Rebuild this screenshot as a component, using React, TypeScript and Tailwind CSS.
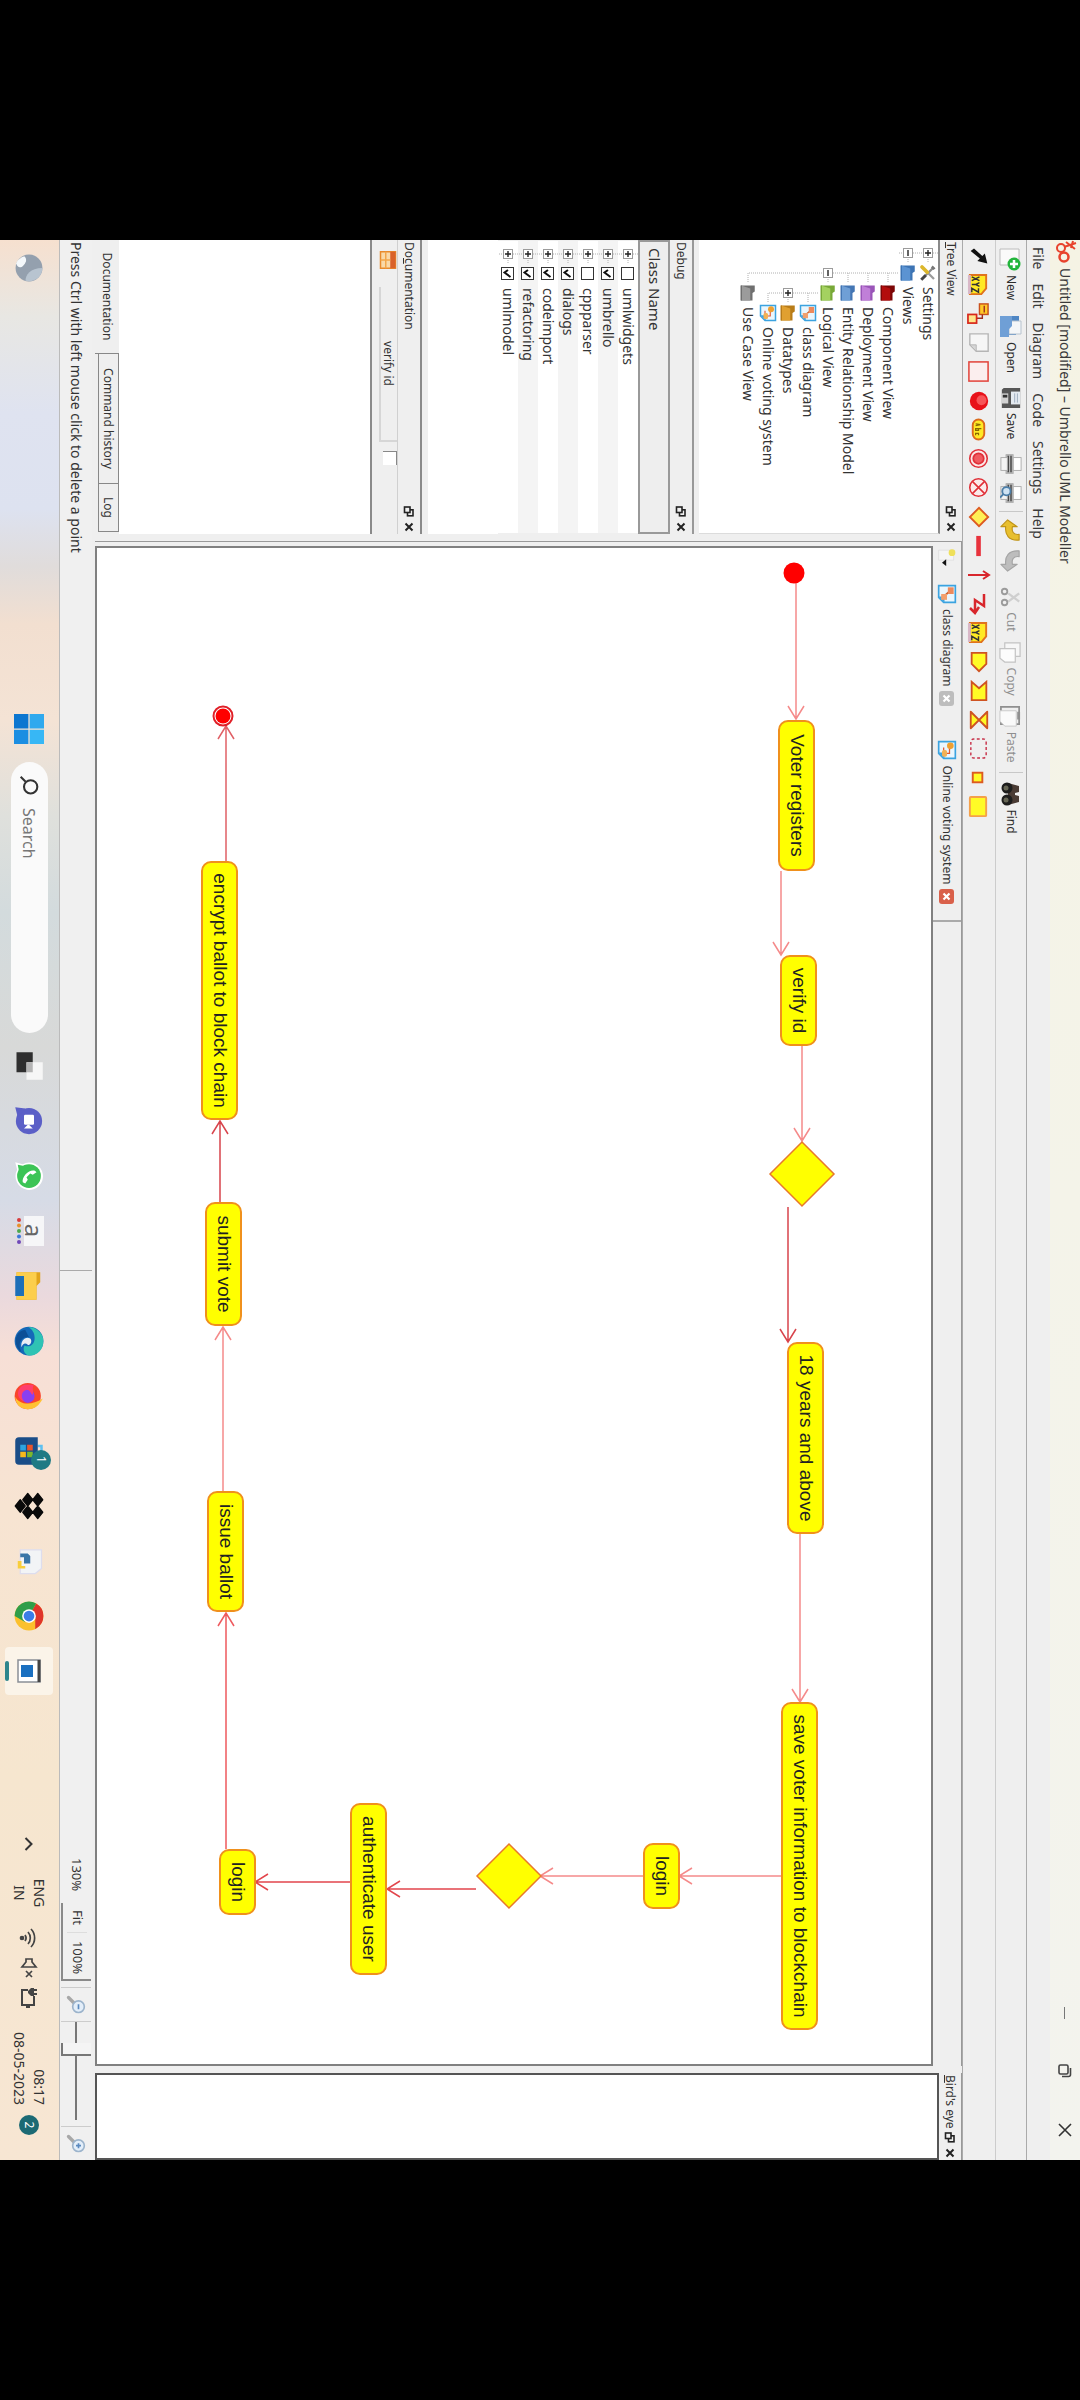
import React from 'react';

type Pt = [number, number];

/* ---------- small drawing helpers ---------- */

function Svg({ s = 22, children }: { s?: number; children: React.ReactNode }) {
  return (
    <svg width={s} height={s} viewBox="0 0 24 24" fill="none" className="shrink-0" aria-hidden="true">
      {children}
    </svg>
  );
}

const Folder = ({ c, d }: { c: string; d: string }) => (
  <Svg s={18}>
    <path d="M2 3h8l2 3h10v15H2z" fill={d} />
    <path d="M6 9h16v12H2z" fill={c} />
    <path d="M2 21h20" stroke={d} strokeWidth="2" />
  </Svg>
);

const DiagramIcon = ({ s = 18, online = false }: { s?: number; online?: boolean }) => (
  <Svg s={s}>
    <path d="M2 2h20v14l-6 6H2z" fill="#eaf6fd" stroke="#3ba3e0" strokeWidth="2" />
    <path d="M22 15l-7 7v-7z" fill="#3ba3e0" />
    {online ? (
      <>
        <path d="M7 9h9v7H9" stroke="#e4572e" strokeWidth="1.5" />
        <circle cx="7" cy="8" r="4" fill="#f0a030" />
        <rect x="12" y="12" width="8" height="6" rx="2" fill="#f2b155" />
      </>
    ) : (
      <>
        <path d="M9 9l6 7" stroke="#c95f2c" strokeWidth="2" />
        <rect x="4" y="4" width="8" height="7" fill="#ee8a5c" />
        <rect x="12" y="12" width="7" height="7" fill="#f2a06e" />
      </>
    )}
  </Svg>
);

const ToolsIcon = () => (
  <Svg s={18}>
    <path d="M4 4l13 13" stroke="#8c8c8c" strokeWidth="3" />
    <path d="M2 6l4-4 2 3-3 3z" fill="#777" />
    <path d="M20 4L9 15" stroke="#9a9a9a" strokeWidth="3" />
    <path d="M11 13l-7 7" stroke="#dcb72c" strokeWidth="5" strokeLinecap="round" />
    <path d="M15 15l6 6" stroke="#444" strokeWidth="4" />
  </Svg>
);

const FloatIcon = () => (
  <svg width="11" height="11" viewBox="0 0 11 11" fill="none" stroke="#222" strokeWidth="1.6" aria-hidden="true">
    <rect x="3.8" y="1" width="6" height="5.5" />
    <rect x="1" y="4" width="5.5" height="5.5" fill="#efefef" />
  </svg>
);

const CloseIcon = () => (
  <svg width="10" height="10" viewBox="0 0 10 10" stroke="#222" strokeWidth="2" aria-hidden="true">
    <path d="M1.5 1.5l7 7M8.5 1.5l-7 7" />
  </svg>
);

const YFILL = '#fffb26';
const RED = '#d8281c';

const Xyz = () => (
  <Svg s={23}>
    <path d="M2 4h14l6 5v12H2z" fill="#ffe924" stroke="#e0731d" strokeWidth="2" />
    <path d="M2 20h20v3H2z" fill="#d9b8c8" />
    <path d="M4 11l4 8M8 11l-4 8M10 11l2 4 2-4M12 15v4M16 12h4l-4 7h4" stroke="#333" strokeWidth="1.5" />
  </Svg>
);

/* ---------- drawing tools of the second toolbar ---------- */

const drawTools: { label: string; icon: React.ReactNode }[] = [
  { label: 'Select', icon: <Svg s={20}><path d="M21 2L9 5l3 3-9 10 3 4 9-11 3 3z" fill="#111" /></Svg> },
  { label: 'Object', icon: <Xyz /> },
  { label: 'Association', icon: <Svg s={23}><rect x="2" y="2" width="11" height="9" fill="#ffc928" stroke="#c9501c" strokeWidth="1.5" /><path d="M4 6h7M13 8h4v6" stroke="#a03020" strokeWidth="1.5" /><rect x="13" y="14" width="9" height="9" fill="#ffe58a" stroke={RED} strokeWidth="1.8" /></Svg> },
  { label: 'Note', icon: <Svg s={22}><path d="M2 2h19v13l-7 7H2z" fill="#f6f6f6" stroke="#b5b5b5" strokeWidth="1.5" /><path d="M21 15h-7v7z" fill="#d6d6d6" stroke="#b5b5b5" /></Svg> },
  { label: 'Box', icon: <Svg s={23}><rect x="2" y="2" width="20" height="20" fill="#fbeeee" stroke="#e2453c" strokeWidth="1.6" /></Svg> },
  { label: 'Initial activity', icon: <Svg s={20}><circle cx="12" cy="12" r="11" fill="#e8121a" /><circle cx="11" cy="9" r="6" fill="#ff7a7a" opacity=".65" /></Svg> },
  { label: 'Activity', icon: <Svg s={23}><rect x="1.500" y="6" width="21" height="12" rx="6" fill="#ffe924" stroke="#dc6a1b" strokeWidth="2" /><path d="M6 15l1-5 1 5M11 9v6h2v-3h-2M18 12h-2v3h2" stroke="#8a6a00" strokeWidth="1.300" /></Svg> },
  { label: 'End activity', icon: <Svg s={21}><circle cx="12" cy="12" r="10" fill="#fbe6e6" stroke="#e03038" strokeWidth="1.800" /><circle cx="12" cy="12" r="6" stroke="#e03038" fill="#f05a60" strokeWidth="2" /></Svg> },
  { label: 'Final activity', icon: <Svg s={21}><circle cx="12" cy="12" r="10" stroke="#e03038" strokeWidth="1.800" fill="#fbeaea" /><path d="M5 5l14 14M19 5L5 19" stroke="#e03038" strokeWidth="1.800" /></Svg> },
  { label: 'Branch', icon: <Svg s={22}><path d="M12 2l10 10-10 10L2 12z" fill="#ffef55" stroke="#dd5a20" strokeWidth="2" /></Svg> },
  { label: 'Fork', icon: <Svg s={22}><rect x="1" y="10" width="22" height="5" fill="#e8323c" /></Svg> },
  { label: 'Transition', icon: <Svg s={24}><path d="M12 23V3M8 8l4-6 4 6" stroke="#d8262c" strokeWidth="2" /></Svg> },
  { label: 'Exception', icon: <Svg s={24}><path d="M2 7h12l-6 9h12M15 12l6 4-5 5" stroke="#d8262c" strokeWidth="2.500" /></Svg> },
  { label: 'Pin', icon: <Xyz /> },
  { label: 'Send signal', icon: <Svg s={22}><path d="M2 4h12l8 8-8 8H2z" fill={YFILL} stroke="#cf5322" strokeWidth="2" /></Svg> },
  { label: 'Accept signal', icon: <Svg s={22}><path d="M2 4h20v16H2l7-8z" fill={YFILL} stroke="#cf5322" strokeWidth="2" /></Svg> },
  { label: 'Accept time', icon: <Svg s={22}><path d="M3 3h18L3 21h18z" fill={YFILL} stroke="#cf5322" strokeWidth="2" strokeLinejoin="round" /></Svg> },
  { label: 'Region', icon: <Svg s={23}><rect x="2" y="4" width="20" height="16" rx="3" stroke="#c8324a" strokeWidth="1.500" strokeDasharray="3 2.500" /></Svg> },
  { label: 'Pin box', icon: <Svg s={23}><rect x="7" y="8" width="10" height="10" fill={YFILL} stroke="#dd5a20" strokeWidth="2" /></Svg> },
  { label: 'Object node', icon: <Svg s={23}><rect x="2" y="4" width="20" height="17" rx="1" fill={YFILL} stroke="#f5a04a" strokeWidth="2" /></Svg> },
];

/* ---------- main toolbar ---------- */

const NewIcon = () => (
  <Svg s={24}><path d="M2 4h12l4 4v15H2z" fill="#fafafa" stroke="#bcbcbc" /><circle cx="17" cy="9" r="6.500" fill="#23b53c" /><path d="M17 5v8M13 9h8" stroke="#fff" strokeWidth="2.500" /></Svg>
);
const OpenIcon = () => (
  <Svg s={24}><path d="M2 4h9l2 3h8v12H2z" fill="#4f86c4" /><path d="M7 2h13v12H7z" fill="#f4f6f8" stroke="#b7c3cf" /><path d="M2 11h10l3 3h8v9H2z" fill="#6f9fd6" /></Svg>
);
const SaveIcon = () => (
  <Svg s={22}><path d="M1 2h22v20H3l-2-2z" fill="#565656" /><rect x="5" y="2" width="14" height="10" fill="#e4eaf0" /><path d="M7 5h10M7 8h10" stroke="#9ab" /><rect x="7" y="15" width="11" height="7" fill="#d2d2d2" /><rect x="8.500" y="16" width="3" height="5" fill="#333" /></Svg>
);
const PrintIcon = ({ preview = false }: { preview?: boolean }) => (
  <Svg s={22}>
    <rect x="5" y="1" width="14" height="9" fill="#fff" stroke="#aaa" />
    <rect x="1" y="9" width="22" height="9" rx="1" fill="#b4b4b4" />
    <path d="M3 12h18M3 15h18" stroke="#444" strokeWidth="1.500" />
    <rect x="5" y="16" width="14" height="7" fill="#f4f4f4" stroke="#aaa" />
    {preview && <><circle cx="10" cy="17" r="4.500" fill="#cfe3f3" stroke="#4c7ea8" strokeWidth="2" /><path d="M13 20l4 4" stroke="#4c7ea8" strokeWidth="2" /></>}
  </Svg>
);
const UndoIcon = ({ c, d, flip = false }: { c: string; d: string; flip?: boolean }) => (
  <Svg s={23}><path d={flip ? 'M23 15l-7 7v-5C8 18 1 14 2 3h6c-1 6 3 8 8 7V5z' : 'M1 15l7 7v-5c8 1 15-3 14-14h-6c1 6-3 8-8 7V5z'} fill={c} stroke={d} strokeWidth="1.200" strokeLinejoin="round" /></Svg>
);
const CutIcon = () => (
  <Svg s={22}><path d="M8 3l9 12M17 3L8 15" stroke="#cfcfcf" strokeWidth="2.500" /><circle cx="6" cy="19" r="3" stroke="#9b9b9b" strokeWidth="2" /><circle cx="18" cy="19" r="3" stroke="#9b9b9b" strokeWidth="2" /></Svg>
);
const CopyIcon = () => (
  <Svg s={23}><path d="M2 2h14v16H2z" fill="#f7f7f7" stroke="#c4c4c4" strokeWidth="1.300" /><path d="M8 7h14v11l-4 5H8z" fill="#fcfcfc" stroke="#c4c4c4" strokeWidth="1.300" /></Svg>
);
const PasteIcon = () => (
  <Svg s={23}><path d="M2 3h18v19H2z" fill="#efefef" stroke="#8f8f8f" strokeWidth="1.800" /><path d="M6 6h16v12l-5 5H6z" fill="#fafafa" stroke="#c9c9c9" /><path d="M7 2h8v3H7z" fill="#8f8f8f" /></Svg>
);
const FindIcon = () => (
  <Svg s={24}><path d="M4 4h6l1 4h2l1-4h6l3 11H1z" fill="#4a3b34" /><circle cx="6" cy="16" r="5.500" fill="#1d1d1d" /><circle cx="18" cy="16" r="5.500" fill="#1d1d1d" /><circle cx="6" cy="17" r="2.500" fill="#665" /><circle cx="18" cy="17" r="2.500" fill="#665" /></Svg>
);

function ToolButton({ icon, label, off, hideLabel }: { icon: React.ReactNode; label: string; off?: boolean; hideLabel?: boolean }) {
  return (
    <button type="button" aria-label={label} className={off ? 'flex items-center gap-1 text-[#8f8f8f]' : 'flex items-center gap-1 text-[#2b2b2b]'}>
      {icon}
      {!hideLabel && <span>{label}</span>}
    </button>
  );
}

/* ---------- tree ---------- */

type Cell = 'v' | 't' | 'l' | 'plus' | 'minus' | 'none';

function Guide({ k }: { k: Cell }) {
  const box = k === 'plus' || k === 'minus';
  return (
    <svg width="20" height="20" viewBox="0 0 20 20" className="shrink-0" fill="none" aria-hidden="true">
      {k !== 'none' && (
        <path
          d={k === 'l' ? 'M10 0v10h9' : k === 'v' ? 'M10 0v20' : 'M10 0v20M10 10h9'}
          stroke="#b0b0b0"
          strokeDasharray="1 1"
        />
      )}
      {box && <rect x="5.500" y="5.500" width="9" height="9" fill="#fff" stroke="#9c9c9c" />}
      {box && <path d={k === 'plus' ? 'M7 10h6M10 7v6' : 'M7 10h6'} stroke="#222" strokeWidth="1.400" />}
    </svg>
  );
}

const treeRows: { cells: Cell[]; icon: React.ReactNode; label: string }[] = [
  { cells: ['plus'], icon: <ToolsIcon />, label: 'Settings' },
  { cells: ['minus'], icon: <Folder c="#5b93d2" d="#3d74b4" />, label: 'Views' },
  { cells: ['none', 't'], icon: <Folder c="#b30d0d" d="#7c0606" />, label: 'Component View' },
  { cells: ['none', 't'], icon: <Folder c="#c07fd8" d="#9a55b8" />, label: 'Deployment View' },
  { cells: ['none', 't'], icon: <Folder c="#6f9fd6" d="#4476b4" />, label: 'Entity Relationship Model' },
  { cells: ['none', 'minus'], icon: <Folder c="#a4d160" d="#78a838" />, label: 'Logical View' },
  { cells: ['none', 'v', 't'], icon: <DiagramIcon />, label: 'class diagram' },
  { cells: ['none', 'v', 'plus'], icon: <Folder c="#e0a030" d="#b87c18" />, label: 'Datatypes' },
  { cells: ['none', 'v', 'l'], icon: <DiagramIcon online />, label: 'Online voting system' },
  { cells: ['none', 'l'], icon: <Folder c="#9b9b9b" d="#6f6f6f" />, label: 'Use Case View' },
];

const classRows: { name: string; on: boolean }[] = [
  { name: 'umlwidgets', on: false },
  { name: 'umbrello', on: true },
  { name: 'cppparser', on: false },
  { name: 'dialogs', on: true },
  { name: 'codeimport', on: true },
  { name: 'refactoring', on: true },
  { name: 'umlmodel', on: true },
];

function DockHeader({ title }: { title: React.ReactNode }) {
  return (
    <header className="flex h-[22px] shrink-0 items-center pl-[2px] pr-[2px] text-xs text-[#333]">
      <h2 className="min-w-0 flex-1 whitespace-nowrap">{title}</h2>
      <button type="button" aria-label="Float" className="w-4 shrink-0"><FloatIcon /></button>
      <button type="button" aria-label="Close" className="w-[10px] shrink-0"><CloseIcon /></button>
    </header>
  );
}

function LeftDock() {
  return (
    <aside className="flex w-[294px] shrink-0 flex-col">
      <DockHeader title={<><u>T</u>ree View</>} />
      <ul className="h-[241px] shrink-0 border-r border-t-2 border-[#8a8a8a] border-r-[#dcdcdc] bg-white pl-[3px] text-sm text-[#333]">
        {treeRows.map((r) => (
          <li key={r.label} className="flex h-5 items-center whitespace-nowrap">
            {r.cells.map((c, i) => <Guide key={i} k={c} />)}
            <span className="mr-1 flex w-5 shrink-0 justify-center">{r.icon}</span>
            {r.label}
          </li>
        ))}
      </ul>

      <div className="mt-[5px] border-t-2 border-[#999]">
        <DockHeader title="Debug" />
      </div>
      <table className="w-full border-collapse text-sm text-[#333]">
        <thead>
          <tr className="h-[30px]">
            <th className="border-2 border-[#999] bg-[#eee] pl-[6px] text-left text-[15px] font-normal">Class Name</th>
          </tr>
        </thead>
        <tbody>
          {classRows.map((r, i) => (
            <tr key={r.name} className={i % 2 ? 'bg-[#f4f4f4]' : 'bg-white'}>
              <td className="h-5 p-0">
                <label className="flex h-5 items-center whitespace-nowrap pl-[3px]">
                  <Guide k="plus" />
                  <span className="relative mr-2 ml-[3px] flex size-[13px]">
                    <input type="checkbox" defaultChecked={r.on} className="peer size-[13px] appearance-none border border-[#333] bg-white" />
                    <svg viewBox="0 0 13 13" className="pointer-events-none absolute inset-0 hidden peer-checked:block" fill="none" aria-hidden="true">
                      <path d="M3 6l2.500 3.500L10 3.500" stroke="#111" strokeWidth="2" />
                    </svg>
                  </span>
                  {r.name}
                </label>
              </td>
            </tr>
          ))}
        </tbody>
      </table>
      <div className="h-[70px] shrink-0 bg-white" />

      <div className="mt-[6px] border-t-2 border-[#8a8a8a]">
        <DockHeader title={<>Do<u>c</u>umentation</>} />
      </div>
      <div className="flex h-[26px] shrink-0 items-start border-t border-[#d0d0d0] pl-[11px]">
        <Svg s={18}>
          <rect x="1" y="2" width="22" height="20" fill="#f9d9a8" stroke="#e88a2c" strokeWidth="2" />
          <rect x="1" y="2" width="22" height="7" fill="#d9622b" />
          <path d="M12 9v13M1 15h22" stroke="#f2a64a" strokeWidth="2" />
        </Svg>
        <input aria-label="Name" defaultValue="verify id" className="mr-[9px] ml-[18px] h-[18px] w-[155px] border-b-2 border-r-2 border-[#d6d6d6] bg-transparent text-center text-xs text-[#333]" />
        <input type="checkbox" aria-label="Lock" className="size-[14px] appearance-none border-r-0 border-l border-t border-[#888] bg-white" />
      </div>
      <textarea aria-label="Documentation" className="block min-h-0 flex-1 resize-none border-t-2 border-[#8a8a8a] bg-white" />
      <div role="tablist" className="flex h-[24px] shrink-0 text-xs text-[#333]">
        <button role="tab" type="button" className="w-[114px] border-r border-[#888]">Documentation</button>
        <button role="tab" type="button" className="mb-[3px] w-[130px] border-b border-r border-t border-[#888]">Command history</button>
        <button role="tab" type="button" className="mb-[3px] w-[48px] border-b border-r border-t border-[#888]">Log</button>
      </div>
    </aside>
  );
}

/* ---------- activity diagram ---------- */

const ORIGIN = { x: 308, y: 149 };

const activities: { x: number; y: number; w: number; label: string }[] = [
  { x: 480, y: 265, w: 151, label: 'Voter registers' },
  { x: 715, y: 263, w: 91, label: 'verify id' },
  { x: 1102, y: 256, w: 192, label: '18 years and above' },
  { x: 1462, y: 262, w: 328, label: 'save voter information to blockchain' },
  { x: 1603, y: 400, w: 66, label: 'login' },
  { x: 1563, y: 693, w: 172, label: 'authenticate user' },
  { x: 1609, y: 824, w: 66, label: 'login' },
  { x: 1251, y: 836, w: 121, label: 'issue ballot' },
  { x: 962, y: 838, w: 124, label: 'submit vote' },
  { x: 621, y: 842, w: 259, label: 'encrypt ballot to block chain' },
];

const flows: { from: Pt; to: Pt; c: string }[] = [
  { from: [343, 284], to: [479, 284], c: '#f58a8a' },
  { from: [631, 299], to: [715, 299], c: '#f58a8a' },
  { from: [806, 278], to: [901, 278], c: '#f58a8a' },
  { from: [967, 292], to: [1102, 292], c: '#d8444c' },
  { from: [1294, 280], to: [1462, 280], c: '#f58a8a' },
  { from: [1636, 299], to: [1636, 401], c: '#f58a8a' },
  { from: [1636, 437], to: [1636, 540], c: '#f58a8a' },
  { from: [1649, 604], to: [1649, 693], c: '#e2464c' },
  { from: [1642, 730], to: [1642, 825], c: '#e2464c' },
  { from: [1609, 854], to: [1373, 854], c: '#ee5a5e' },
  { from: [1251, 857], to: [1087, 857], c: '#f58a8a' },
  { from: [962, 860], to: [881, 860], c: '#d8444c' },
  { from: [621, 854], to: [486, 854], c: '#e06066' },
];

const branches: Pt[] = [[934, 278], [1636, 571]];

function arrow([x1, y1]: Pt, [x2, y2]: Pt) {
  const dx = Math.sign(x2 - x1);
  const dy = Math.sign(y2 - y1);
  const bx = x2 - dx * 13;
  const by = y2 - dy * 13;
  return `M${x1} ${y1}L${x2} ${y2}M${bx + dy * 8} ${by + dx * 8}L${x2} ${y2}L${bx - dy * 8} ${by - dx * 8}`;
}

function Canvas() {
  return (
    <section aria-label="Online voting system diagram" className="relative min-h-0 flex-1 overflow-hidden border-2 border-[#808080] bg-white">
      <svg className="absolute inset-0 size-full" fill="none" aria-hidden="true">
        <g transform={`translate(${-ORIGIN.x} ${-ORIGIN.y})`}>
          {flows.map((f, i) => <path key={i} d={arrow(f.from, f.to)} stroke={f.c} strokeWidth="1.500" />)}
          {branches.map(([x, y]) => (
            <path key={x} d={`M${x - 32} ${y}L${x} ${y - 32}L${x + 32} ${y}L${x} ${y + 32}Z`} fill="#ff0" stroke="#e8782a" strokeWidth="1.500" />
          ))}
          <circle cx="333" cy="286" r="10.500" fill="#f00" />
          <circle cx="476" cy="857" r="9.500" fill="#fff" stroke="#e02028" strokeWidth="2" />
          <circle cx="476" cy="857" r="7.500" fill="#f00" />
        </g>
      </svg>
      {activities.map((a) => (
        <div
          key={`${a.label}${a.y}`}
          className="absolute flex h-[37px] items-center justify-center whitespace-nowrap rounded-[10px] border-2 border-[#f0901c] bg-[#ffff00] font-['Liberation_Sans',sans-serif] text-[19px] text-[#222]"
          style={{ left: a.x - ORIGIN.x, top: a.y - ORIGIN.y, width: a.w }}
        >
          {a.label}
        </div>
      ))}
    </section>
  );
}

function TabClose({ hot }: { hot?: boolean }) {
  return (
    <button type="button" aria-label="Close tab" className={hot ? 'flex size-[15px] items-center justify-center rounded-[3px] bg-[#d9604a]' : 'flex size-[15px] items-center justify-center rounded-[3px] bg-[#bdbdbd]'}>
      <svg width="9" height="9" viewBox="0 0 9 9" stroke="#fff" strokeWidth="2.200" aria-hidden="true"><path d="M1.500 1.500l6 6M7.500 1.500l-6 6" /></svg>
    </button>
  );
}

function Workspace() {
  return (
    <main className="flex min-w-0 flex-1 flex-col border-l border-t border-[#999] pl-1">
      <div className="flex h-[28px] shrink-0 items-center text-xs text-[#333]">
        <button type="button" aria-label="New diagram" className="mr-[12px] flex w-[26px] items-center">
          <Svg s={20}>
            <path d="M5 4h12v18H5z" fill="#f5f5f5" stroke="#ddd" />
            <circle cx="8" cy="6" r="4" fill="#efe05a" />
            <path d="M16 13h8l-4 5z" fill="#111" />
          </Svg>
        </button>
        <div role="tablist" className="flex h-full items-center gap-[34px] border-r-2 border-[#aaa] pr-4">
          <div role="tab" className="flex items-center gap-[5px]"><DiagramIcon s={20} />class diagram<TabClose /></div>
          <div role="tab" className="flex items-center gap-[5px]"><DiagramIcon s={20} online />Online voting system<TabClose hot /></div>
        </div>
      </div>
      <Canvas />
    </main>
  );
}

function Magnifier({ sign }: { sign: string }) {
  return (
    <Svg s={20}>
      <path d="M9 15l-6 6" stroke="#a8a8a8" strokeWidth="4" strokeLinecap="round" />
      <circle cx="14" cy="9" r="7" fill="#e3eef9" stroke="#9cb4cc" strokeWidth="2" />
      <path d={sign} stroke="#5a8ac0" strokeWidth="2" />
    </Svg>
  );
}

function StatusBar() {
  return (
    <footer className="flex h-[32px] shrink-0 items-center bg-[#f0f0f0] text-[13px] text-[#333]">
      <p className="w-[1031px] border-r border-[#aaa] py-[6px] pl-[2px] text-sm">Press Ctrl with left mouse click to delete a point</p>
      <div className="flex h-full flex-1 items-center justify-end">
        <span className="mr-[12px]">130%</span>
        <div className="flex h-[30px] items-center border-b-2 border-r-2 border-[#8a8a8a] pr-[5px]">
          <button type="button" className="mr-2 border-r border-[#ddd] px-[7px]">Fit</button>
          <button type="button">100%</button>
        </div>
        <button type="button" aria-label="Zoom out" className="ml-[6px] flex h-[30px] w-[35px] items-center justify-center border-x border-[#ccc]"><Magnifier sign="M11 9h6" /></button>
        <input
          type="range"
          aria-label="Zoom"
          min="0"
          max="100"
          defaultValue="25"
          className="h-[30px] w-[98px] appearance-none bg-[linear-gradient(#777,#777)] bg-[length:100%_2px] bg-center bg-no-repeat [&::-webkit-slider-thumb]:h-[30px] [&::-webkit-slider-thumb]:w-[13px] [&::-webkit-slider-thumb]:appearance-none [&::-webkit-slider-thumb]:border-b-2 [&::-webkit-slider-thumb]:border-r-2 [&::-webkit-slider-thumb]:border-[#777] [&::-webkit-slider-thumb]:bg-[#f4f4f4]"
        />
        <button type="button" aria-label="Zoom in" className="ml-[6px] flex h-[30px] w-[34px] items-center justify-center border-l border-[#ccc]"><Magnifier sign="M11 9h6M14 6v6" /></button>
      </div>
    </footer>
  );
}

/* ---------- task bar ---------- */

const apps: { label: string; icon: React.ReactNode }[] = [
  { label: 'Task view', icon: <Svg s={30}><path d="M1 9h16v13H1z" fill="#2f2f2f" /><rect x="9" y="1" width="14" height="13" fill="#f6f6f6" /><path d="M9 9h8v5H9z" fill="#b5b5b5" /></Svg> },
  { label: 'Chat', icon: <Svg s={30}><circle cx="12" cy="12" r="10.500" fill="#5b5fc7" /><path d="M2 15l-1 8 8-2z" fill="#5b5fc7" /><rect x="7" y="8" width="8" height="8" rx="1" fill="#fff" /><path d="M15 12l3-3v7l-3-3z" fill="#fff" /></Svg> },
  { label: 'WhatsApp', icon: <Svg s={30}><path d="M1 23l1.500-6A11 11 0 1 1 7 21.500z" fill="#fff" /><circle cx="12" cy="12" r="9.500" fill="#3cc456" /><path d="M3 21l1-5 4 4z" fill="#3cc456" /><path d="M8 7c-2 4 4 11 9 10l1-2-3-2-2 1-3-3 1-2-2-3z" fill="#fff" /></Svg> },
  { label: 'Amazon', icon: (
    <span className="flex size-[30px] flex-col items-center">
      <span className="flex h-[20px] w-full items-center justify-center bg-[#f6f6f8] text-[24px] leading-5 text-[#666]">a</span>
      <svg width="30" height="8" viewBox="0 0 30 8" aria-hidden="true"><circle cx="4" cy="5" r="2" fill="#d83c3c" /><circle cx="9.500" cy="5" r="2" fill="#e8902c" /><circle cx="15" cy="5" r="2" fill="#4ca84c" /><circle cx="20.500" cy="5" r="2" fill="#3c78d8" /><circle cx="26" cy="5" r="2" fill="#7048b8" /></svg>
    </span>
  ) },
  { label: 'File Explorer', icon: <Svg s={30}><path d="M1 3h8l3 3h11v16H1z" fill="#e2a41c" /><path d="M1 6h22v16H1z" fill="#fcce4c" /><path d="M4 16h16v7H4z" fill="#1d6fb8" /></Svg> },
  { label: 'Edge', icon: <Svg s={30}><circle cx="12" cy="12" r="11.500" fill="#1569b8" /><path d="M1 10C3 3 8 .500 12 .500c7 0 12 5 11.500 11 0 4-5 6-8 4 2-3 0-8-6-8-4 0-7 2-8.500 5z" fill="#2fc3b4" /><path d="M9 12c-1 5 4 10 12 6-5 7-17 6-18-3z" fill="#0c4f96" /><path d="M10 11c-2 4 2 8 7 7-3-1-4-3-2-5 1-2-3-4-5-2z" fill="#e9eef4" /></Svg> },
  { label: 'Firefox', icon: <Svg s={30}><circle cx="12" cy="13" r="10.500" fill="#f9452c" /><path d="M14 1c6 3 9 7 8.500 13-1 6-5 9-10 9 6-3 8-12 1.500-22z" fill="#ffc233" /><circle cx="12" cy="13" r="5.500" fill="#8a3ff0" /><path d="M3 8c3 2 5 0 8 1-1 2-4 2-4 5 1 4 6 5 9 2-1 6-11 7-13-1z" fill="#ff3d6c" /></Svg> },
  { label: 'Microsoft Store', icon: (
    <span className="relative">
      <Svg s={30}><path d="M8 5V2h8v3" stroke="#5fc0f0" strokeWidth="2" /><path d="M1 5h22v15a3 3 0 0 1-3 3H4a3 3 0 0 1-3-3z" fill="#1a4d88" /><path d="M7 9h4.500v4.500H7z" fill="#e8542c" /><path d="M12.500 9H17v4.500h-4.500z" fill="#7cb82c" /><path d="M7 14.500h4.500V19H7z" fill="#2ca4e0" /><path d="M12.500 14.500H17V19h-4.500z" fill="#f8b81c" /></Svg>
      <span className="absolute -top-[7px] left-[14px] flex size-[20px] items-center justify-center rounded-full bg-[#1f7a84] text-xs text-white">1</span>
    </span>
  ) },
  { label: 'Dropbox', icon: <Svg s={30}><path d="M7 1l5 4-5 4-5-4zM17 1l5 4-5 4-5-4zM7 9l5 4-5 4-5-4zM17 9l5 4-5 4-5-4zM12 15l5 4-5 4-5-4z" fill="#0a0a0a" stroke="#0a0a0a" strokeLinejoin="round" /></Svg> },
  { label: 'Python', icon: <Svg s={30}><path d="M3 2h15l4 5v12H3z" fill="#f2f4f6" stroke="#dde" /><path d="M8 11h6v5H9v3H6v-6z" fill="#3a76a8" /><path d="M18 15v6h-6v-3h4v-3z" fill="#f8ce3c" /></Svg> },
  { label: 'Chrome', icon: <Svg s={30}><circle cx="12" cy="12" r="11.500" fill="#fbc02d" /><path d="M12 12L2 6.300A11.500 11.500 0 0 1 22 6.300L22.500 7H12z" fill="#e0352b" /><path d="M2 6.300A11.500 11.500 0 0 0 12 23.500l4.500-8L12 12z" fill="#2f9e4a" /><circle cx="12" cy="12" r="5.500" fill="#fff" /><circle cx="12" cy="12" r="4.300" fill="#3b7de8" /></Svg> },
];

function Taskbar() {
  return (
    <nav
      aria-label="Taskbar"
      className="flex h-[60px] shrink-0 items-center border-t border-[#bbb] bg-[linear-gradient(90deg,#f6e0cf_0%,#e8e7e3_4%,#dfe3f0_9%,#dde2f0_14%,#e0dcdb_17%,#f2dfd0_20%,#f4e3d5_25%,#dfe0dc_30%,#d3dbdd_35%,#d8d9d8_42%,#d6dbe6_50%,#ead9dd_55%,#f7dfd6_58%,#f7e4d2_66%,#f6e6cf_80%,#f7e6d3_100%)] text-[#333]"
    >
      <button type="button" aria-label="Widgets" className="ml-[14px]">
        <Svg s={28}><circle cx="12" cy="12" r="11.500" fill="#94a0ae" /><path d="M12 .500A11.500 11.500 0 0 1 23 15c-5 0-11-4-11-14.500z" fill="#b8c4d0" /><path d="M2 16c3-3 6-1 8 1s2 5-2 6c-3-1-5-4-6-7z" fill="#f4f8fb" /></Svg>
      </button>
      <button type="button" aria-label="Start" className="ml-[432px]">
        <Svg s={30}><path d="M0 0h11.500v11.500H0z" fill="#2fa9ee" /><path d="M12.500 0H24v11.500H12.500z" fill="#37b7f5" /><path d="M0 12.500h11.500V24H0z" fill="#0c76d0" /><path d="M12.500 12.500H24V24H12.500z" fill="#1b8ee2" /></Svg>
      </button>
      <label className="ml-[18px] flex h-[37px] w-[271px] items-center gap-3 rounded-full bg-[#fafafa] pl-[14px]">
        <Svg s={20}><circle cx="13" cy="10" r="8" stroke="#333" strokeWidth="2.500" /><path d="M7 16l-6 6" stroke="#333" strokeWidth="2.500" /></Svg>
        <input type="search" placeholder="Search" aria-label="Search" className="w-40 bg-transparent text-base text-[#333] outline-none placeholder:text-[#777]" />
      </label>
      <div className="ml-[5px] flex">
        {apps.map((a) => (
          <button key={a.label} type="button" aria-label={a.label} className="flex h-12 w-[55px] items-center justify-center">{a.icon}</button>
        ))}
        <button type="button" aria-label="Umbrello" className="relative ml-1 flex h-12 w-12 items-center justify-center rounded bg-[#fbf4e9]">
          <svg width="24" height="24" viewBox="0 0 24 24" aria-hidden="true"><rect x="1" y="1" width="22" height="22" fill="#fff" stroke="#8a8f96" strokeWidth="1.500" /><path d="M1 2h22" stroke="#444" strokeWidth="3" /><rect x="6" y="8" width="12" height="12" fill="#1a6fc0" /></svg>
          <span className="absolute bottom-0 left-[14px] h-1 w-5 rounded bg-[#2d858c]" />
        </button>
      </div>
      <div className="ml-auto flex items-center pr-[25px]">
        <svg width="16" height="10" viewBox="0 0 16 10" fill="none" stroke="#333" strokeWidth="2" aria-hidden="true"><path d="M2 8.500l6-6 6 6" /></svg>
        <div className="ml-[25px] w-[32px] text-center text-sm leading-5">ENG<br />IN</div>
        <svg className="ml-[18px]" width="22" height="20" viewBox="0 0 22 20" fill="none" stroke="#444" strokeWidth="1.700" aria-hidden="true"><path d="M2 8a13 13 0 0 1 18 0M5 11a9 9 0 0 1 12 0M8 14a5 5 0 0 1 6 0" /><circle cx="11" cy="17" r="1.500" fill="#444" /></svg>
        <svg className="ml-[8px]" width="22" height="18" viewBox="0 0 22 18" fill="none" stroke="#444" strokeWidth="1.700" aria-hidden="true"><path d="M2 6h3l5-4v14l-5-4H2zM14 6l6 6M20 6l-6 6" /></svg>
        <svg className="ml-[8px]" width="22" height="18" viewBox="0 0 22 18" fill="none" stroke="#444" strokeWidth="2" aria-hidden="true"><path d="M9 4h9v12H3v-6M20 8v4" /><path d="M3 1v3M7 1v3" /><path d="M1 4h8v3l-3 3H4L1 7z" fill="#444" stroke="none" /></svg>
        <time className="ml-[16px] w-[80px] text-right text-sm leading-5">08:17<br />08-05-2023</time>
        <span className="ml-[10px] flex size-5 items-center justify-center rounded-full bg-[#1c6a74] text-xs text-white">2</span>
      </div>
    </nav>
  );
}

export default function App() {
  return (
    <div className="flex h-screen w-full items-center justify-center overflow-hidden bg-black">
      <div className="flex h-[100vw] w-[80vh] shrink-0 rotate-90 flex-col overflow-hidden bg-[#efefef] font-['Noto_Sans','Open_Sans',sans-serif]">
        <header className="flex h-[30px] shrink-0 items-center bg-[linear-gradient(90deg,#f5f3e4,#f3f3ee)] text-[#3a3a3a]">
          <Svg s={24}><path d="M1 4l7 2M3 1l4 12M9 2L2 11" stroke="#e8432c" strokeWidth="2" /><circle cx="8" cy="16" r="4" stroke="#e8432c" strokeWidth="2" /><circle cx="17" cy="13" r="4.500" stroke="#e8432c" strokeWidth="2.500" /></Svg>
          <h1 className="ml-1 flex-1 text-sm">Untitled [modified] – Umbrello UML Modeller</h1>
          <div className="flex">
            <button type="button" aria-label="Minimize" className="flex w-[58px] items-center justify-center"><span className="h-px w-3 bg-[#777]" /></button>
            <button type="button" aria-label="Restore" className="flex w-[58px] items-center justify-center">
              <svg width="14" height="14" viewBox="0 0 14 14" fill="none" stroke="#444" strokeWidth="1.600" aria-hidden="true"><rect x="1" y="4" width="9" height="9" rx="1.500" /><path d="M4 1.500h6.500a2 2 0 0 1 2 2V10" /></svg>
            </button>
            <button type="button" aria-label="Close" className="flex w-[60px] items-center justify-center">
              <svg width="14" height="14" viewBox="0 0 14 14" stroke="#333" strokeWidth="1.600" aria-hidden="true"><path d="M1 1l12 12M13 1L1 13" /></svg>
            </button>
          </div>
        </header>
        <div role="menubar" className="flex h-[24px] shrink-0 items-center gap-[14px] border-b border-[#aaa] pl-[7px] text-sm text-[#3a3a3a]">
          {['File', 'Edit', 'Diagram', 'Code', 'Settings', 'Help'].map((m) => <button key={m} type="button" role="menuitem">{m}</button>)}
        </div>
        <div role="toolbar" aria-label="Main" className="flex h-[31px] shrink-0 items-center gap-[14px] border-b border-[#ccc] pl-[7px] text-xs">
          <ToolButton icon={<NewIcon />} label="New" />
          <ToolButton icon={<OpenIcon />} label="Open" />
          <ToolButton icon={<SaveIcon />} label="Save" />
          <div className="flex items-center gap-[7px]">
            <ToolButton icon={<PrintIcon />} label="Print" hideLabel />
            <ToolButton icon={<PrintIcon preview />} label="Print preview" hideLabel />
            <span className="h-6 w-px bg-[#c8c8c8]" />
            <ToolButton icon={<UndoIcon c="#e8bf2e" d="#c09418" />} label="Undo" hideLabel />
            <ToolButton icon={<UndoIcon c="#bdbdbd" d="#a5a5a5" flip />} label="Redo" hideLabel />
          </div>
          <div className="flex items-center gap-[9px]">
            <ToolButton icon={<CutIcon />} label="Cut" off />
            <ToolButton icon={<CopyIcon />} label="Copy" off />
            <ToolButton icon={<PasteIcon />} label="Paste" off />
            <span className="h-6 w-px bg-[#c8c8c8]" />
            <ToolButton icon={<FindIcon />} label="Find" />
          </div>
        </div>
        <div role="toolbar" aria-label="Diagram tools" className="flex h-[33px] shrink-0 items-center border-b border-[#aaa] pl-px">
          {drawTools.map((t) => (
            <button key={t.label} type="button" aria-label={t.label} className="flex h-7 w-[29px] items-center justify-center">{t.icon}</button>
          ))}
        </div>
        <div className="flex min-h-0 flex-1 gap-[7px] pb-[3px]">
          <LeftDock />
          <Workspace />
          <aside className="flex w-[87px] shrink-0 flex-col border-t border-[#999]">
            <DockHeader title={<><u>B</u>ird's eye</>} />
            <div className="min-h-0 flex-1 border-2 border-[#555] bg-white" />
          </aside>
        </div>
        <StatusBar />
        <Taskbar />
      </div>
    </div>
  );
}
